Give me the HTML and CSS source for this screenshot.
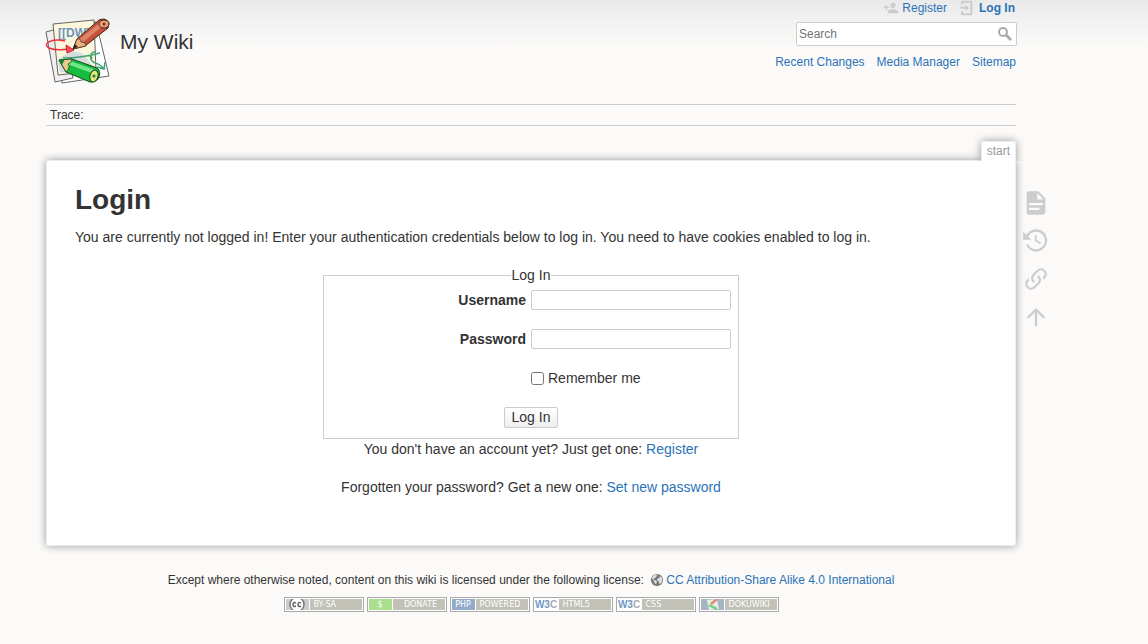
FILE: index.html
```html
<!DOCTYPE html>
<html lang="en">
<head>
<meta charset="utf-8">
<title>Login - My Wiki</title>
<link rel="stylesheet" href="styles.css">
</head>
<body>
<div class="site">
  <header class="header">
    <a class="brand" href="#">
      <svg class="logo" viewBox="0 0 64 64" aria-hidden="true">
        <g stroke="#666" stroke-width="1">
          <path d="M15 8 50 3 63 57 16 64z" fill="#fff"/>
          <path d="M0 13 18 8 27 59 9 63z" fill="#f1eef0"/>
          <path d="M7 5 48 1 50 52 12 56z" fill="#fbf6dc"/>
        </g>
        <path d="M12 42q14-16 27-5l9 12-12 6-22-2z" fill="#d4dcde"/>
        <text class="logo-text" x="12" y="18">[[DW]]</text>
        <path d="M19 22C4 19-4 25 3 29q7 3 20 1" fill="none" stroke="#e8333b" stroke-width="1.5"/>
        <path d="M20 26l8 5-7 3z" fill="#f4525a" stroke="#d3212b"/>
        <path d="M17 39Q36 39 54 34M45 36q-2 7 7 9l7 5M59 43l-1 7-7-2M49 33q-6 0-3 7" fill="none" stroke="#3fa672" stroke-width="1.5"/>
        <path d="M27 30 31 20 53 1q7-3 10 3l-1 5-23 18z" fill="#c15339" stroke="#4b2319"/>
        <path d="M32 21 55 3l3 3-22 18z" fill="#dc8368"/>
        <path d="M27 30 31 20q4-1 4 3 5 0 5 4z" fill="#e8b47c" stroke="#4b2319" stroke-width=".8"/>
        <path d="m27 30 2-5 3 3z" fill="#3b211a"/>
        <ellipse cx="58" cy="5" rx="5" ry="4" fill="#e8a078" stroke="#4b2319"/>
        <circle cx="58" cy="5" r="1.5" fill="#7c2c1e"/>
        <path d="M13 41 26 40 51 49q5 4 1 11-4 4-8 3L20 53z" fill="#16bc3c" stroke="#17471f"/>
        <path d="m24 42 26 9-2 4-27-10z" fill="#73e488"/>
        <path d="M13 41 26 40q0 4-4 5 3 3-2 8z" fill="#e6cc8b" stroke="#17471f" stroke-width=".8"/>
        <path d="m13 41 6-1-3 6z" fill="#158431"/>
        <ellipse cx="48" cy="57" rx="4" ry="6" fill="#dce979" stroke="#17471f" transform="rotate(16 48 57)"/>
        <circle cx="48" cy="57" r="1.6" fill="#287c35"/>
      </svg>
      <span>My Wiki</span>
    </a>
    <div class="tools">
      <nav class="usertools" aria-label="User tools">
        <a href="#"><svg class="tool-icon" viewBox="0 0 24 24" aria-hidden="true"><path d="M15 14c-2.700 0-8 1.300-8 4v2h16v-2c0-2.700-5.300-4-8-4m-9-4V7H4v3H1v2h3v3h2v-3h3v-2m6 2a4 4 0 1 0 0-8 4 4 0 0 0 0 8z"/></svg>Register</a>
        <a class="strong" href="#"><svg class="tool-icon" viewBox="0 0 24 24" aria-hidden="true"><path d="M5 1h13a2 2 0 0 1 2 2v18a2 2 0 0 1-2 2H5a2 2 0 0 1-2-2v-4h3v3h11V4H6v3H3V3a2 2 0 0 1 2-2m5 6 5 5-5 5v-4H2v-3h8z"/></svg>Log In</a>
      </nav>
      <form class="search">
        <input type="text" placeholder="Search" aria-label="Search">
        <button type="button" aria-label="Search"><svg viewBox="0 0 16 16" aria-hidden="true"><circle cx="7" cy="6" r="4"/><path d="m10 9 5 5"/></svg></button>
      </form>
      <nav class="sitetools" aria-label="Site tools"><a href="#">Recent Changes</a><a href="#">Media Manager</a><a href="#">Sitemap</a></nav>
    </div>
  </header>
  <div class="trace">Trace:</div>
  <div class="wrapper">
    <div class="page-id"><span>start</span></div>
    <main class="page">
      <h1>Login</h1>
      <p>You are currently not logged in! Enter your authentication credentials below to log in. You need to have cookies enabled to log in.</p>
      <div class="centered">
        <form>
          <fieldset>
            <legend>Log In</legend>
            <div class="rows">
              <label class="row" for="user"><b>Username</b><input id="user" type="text"></label>
              <label class="row" for="pass"><b>Password</b><input id="pass" type="password"></label>
              <label class="row check" for="rem"><input id="rem" type="checkbox"><span>Remember me</span></label>
              <button class="submit" type="button">Log In</button>
            </div>
          </fieldset>
        </form>
        <p>You don't have an account yet? Just get one: <a href="#">Register</a></p>
        <p>Forgotten your password? Get a new one: <a href="#">Set new password</a></p>
      </div>
    </main>
    <nav class="pagetools" aria-label="Page tools">
      <a href="#" aria-label="Show page"><svg viewBox="0 0 24 24"><path d="M13 9h5.500L13 3.500V9M6 2h8l6 6v12a2 2 0 0 1-2 2H6a2 2 0 0 1-2-2V4a2 2 0 0 1 2-2m9 16v-2H6v2h9m3-4v-2H6v2z"/></svg></a>
      <a href="#" aria-label="Old revisions"><svg viewBox="0 0 24 24"><path d="M11 7v5.100l4.700 2.800.8-1.300-4-2.400V7m0-5C8.900 2 5.700 3.900 3.900 6.800L1 4v7h7L5.400 8.200A7.500 7.500 0 1 1 5.400 15H3.300A9.500 9.500 0 1 0 12.500 2z"/></svg></a>
      <a href="#" aria-label="Backlinks"><svg viewBox="0 0 24 24"><path d="M10.600 13.400c.4.400.4 1 0 1.400-.4.400-1 .4-1.400 0a5 5 0 0 1 0-7.100l3.500-3.500a5 5 0 0 1 7.100 7.100l-1.500 1.500c0-.8-.1-1.600-.4-2.400l.5-.5a3 3 0 0 0-4.300-4.300l-3.500 3.500a3 3 0 0 0 0 4.300m2.800-4.200c.4-.4 1-.4 1.400 0a5 5 0 0 1 0 7.100l-3.500 3.500a5 5 0 0 1-7.100-7.100l1.500-1.500c0 .8.100 1.600.4 2.400l-.5.500a3 3 0 0 0 4.300 4.300l3.500-3.500a3 3 0 0 0 0-4.300c-.4-.4-.4-1 0-1.400z"/></svg></a>
      <a href="#" aria-label="Back to top"><svg viewBox="0 0 24 24"><path d="M13 20h-2V8l-5.500 5.500-1.400-1.400L12 4.200l7.900 7.900-1.400 1.400L13 8z"/></svg></a>
    </nav>
  </div>
  <footer class="footer">
    <div class="license">Except where otherwise noted, content on this wiki is licensed under the following license:
      <a href="#"><svg viewBox="0 0 16 16" aria-hidden="true"><circle cx="8" cy="8" r="7" fill="#777"/><path d="M3 4q3-3 5-2l-1 3-3 1 1 2 3 1-1 4-2-2-1-3-2-2zM10 3l4 2v5l-3 3-1-3-2-2 1-2 3-1z" fill="#ddd"/></svg>CC Attribution-Share Alike 4.0 International</a></div>
    <div class="buttons">
      <a class="badge" href="#"><span class="mark cc"><svg viewBox="0 0 22 11" aria-hidden="true"><circle cx="11" cy="5.500" r="7" fill="#fff" stroke="#777" stroke-width="1.500"/><path d="M10 4Q7 2.500 7 5.500t3 1.500M15 4q-3-1.500-3 1.500t3 1.500" fill="none" stroke="#666" stroke-width="1.500"/></svg></span><span class="word">BY-SA</span></a>
      <a class="badge" href="#"><span class="mark donate">$</span><span class="word mid">DONATE</span></a>
      <a class="badge" href="#"><span class="mark php">PHP</span><span class="word">POWERED</span></a>
      <a class="badge" href="#"><span class="mark w3c">W3<i>C</i></span><span class="word">HTML5</span></a>
      <a class="badge" href="#"><span class="mark w3c">W3<i>C</i></span><span class="word">CSS</span></a>
      <a class="badge" href="#"><span class="mark doku"><svg viewBox="0 0 22 11" aria-hidden="true"><path d="m6 1 10-1 2 10-10 1z" fill="#e9eee4"/><path d="m10 5 6-5" stroke="#e08a78" stroke-width="2.500"/><path d="m8 6 8 4" stroke="#70cf83" stroke-width="2.500"/></svg></span><span class="word">DOKUWIKI</span></a>
    </div>
  </footer>
</div>
</body>
</html>
```
FILE: styles.css
```css
* { box-sizing: border-box; }
body {
  margin: 0;
  min-height: 100vh;
  background: #fbfaf9 linear-gradient(#eaeaea, #fbfaf9) no-repeat 0 0 / 100% 46px;
  color: #333;
  font: 14px/21px "Liberation Sans", Arial, sans-serif;
}
a { color: #2b73b7; text-decoration: none; }
input, button { font: inherit; color: inherit; }
.site { max-width: 1056px; margin: 0 auto; padding-right: 86px; }

.header { display: flex; justify-content: space-between; height: 104px; }
.brand { display: flex; gap: 10px; align-self: flex-start; padding-top: 19px; color: #333; font-size: 21px; line-height: 46px; }
.logo { width: 64px; height: 64px; overflow: visible; }
.logo-text { font: bold 12px "Liberation Sans", Arial, sans-serif; fill: #6d94bd; }
.tools { display: flex; flex-direction: column; align-items: flex-end; font-size: 12px; line-height: 16px; }
.usertools { display: flex; gap: 12px; padding-right: 1px; }
.usertools a { display: flex; align-items: center; gap: 3px; }
.usertools .strong { font-weight: bold; gap: 4px; }
.tool-icon { width: 16px; height: 16px; fill: #ccc; }
.search { display: flex; align-items: center; width: 221px; height: 24px; margin: 6px -1px 8px 0; border: 1px solid #ccc; border-radius: 2px; background: #fff; }
.search input { flex: 1; min-width: 0; height: 22px; padding: 0 2px; border: 0; background: none; }
.search input::placeholder { color: #757575; }
.search button { width: 24px; height: 22px; padding: 3px 4px; border: 0; background: none; }
.search svg { display: block; width: 16px; height: 16px; fill: none; stroke: #aaa; stroke-width: 2; }
.search path { stroke-width: 3; }
.sitetools { display: flex; gap: 12px; }

.trace { padding: 2px 4px 1px; border: solid #ccc; border-width: 1px 0; font-size: 12px; line-height: 17px; }
.wrapper { position: relative; }
.page-id { display: flex; justify-content: flex-end; padding-top: 15px; font-size: 12px; line-height: 19px; color: #999; }
.page-id span { position: relative; z-index: 1; margin-bottom: -1px; padding: 0 5px; border: solid #eee; border-width: 1px 1px 0; border-radius: 2px 2px 0 0; background: #fff; box-shadow: 0 0 8px #999; clip-path: inset(-8px -8px 0 -8px); }
.page { position: relative; padding: 22px 28px 47px; border: 1px solid #eee; border-radius: 2px; background: #fff; box-shadow: 0 0 8px #999; }
h1 { margin: 0 0 10px; font-size: 28px; line-height: 34px; }
p { margin: 0 0 17px; }
.centered { text-align: center; }
.centered p:last-child { margin: 0; }
fieldset { width: 416px; max-width: 100%; margin: 0 auto; padding: 4px 7px 10px; border: 1px solid #ccc; }
legend { padding: 0 1px; margin: 0 auto; }
.rows { display: grid; gap: 19px; }
.row { display: flex; justify-content: flex-end; align-items: center; gap: 5px; height: 20px; }
.row input[type="text"], .row input[type="password"] { width: 200px; height: 20px; border: 1px solid #ccc; border-radius: 2px; background: #fff; }
.check input { width: 13px; height: 13px; margin: 0; }
.check { gap: 4px; }
.check span { width: 183px; text-align: left; }
.submit { justify-self: center; height: 21px; padding: 0 7px; border: 1px solid #ccc; border-radius: 2px; background: linear-gradient(#fff, #eee); line-height: 19px; }

.pagetools { position: absolute; top: 63px; left: 100%; display: grid; gap: 10px; padding-left: 6px; }
.pagetools svg { display: block; width: 28px; height: 28px; fill: #ccc; }

.footer { padding-top: 25px; font-size: 12px; line-height: 18px; text-align: center; }
.license svg { width: 14px; height: 14px; margin: 0 2px 0 3px; vertical-align: -3px; }
.buttons { display: flex; justify-content: center; gap: 3px; margin-top: 8px; }
.badge { display: flex; gap: 1px; width: 80px; height: 15px; padding: 1px; border: 1px solid #aaa; background: #fff; color: #fff; font: 8px/11px "DejaVu Sans", sans-serif; }
.mark { width: 23px; overflow: hidden; }
.mark svg { display: block; width: 22px; height: 11px; }
.word { flex: 1; padding-left: 4px; background: #c1c1b7; text-align: left; }
.mid { text-align: center; }
.cc { background: #ccc; }
.donate { background: #a8e08d; }
.php { background: #92abcb; }
.w3c { color: #6f97c4; font: bold 10px/11px "Liberation Sans", sans-serif; }
.w3c i { color: #aaa; font-style: normal; }
.doku { background: #a3b5c3; }
```
